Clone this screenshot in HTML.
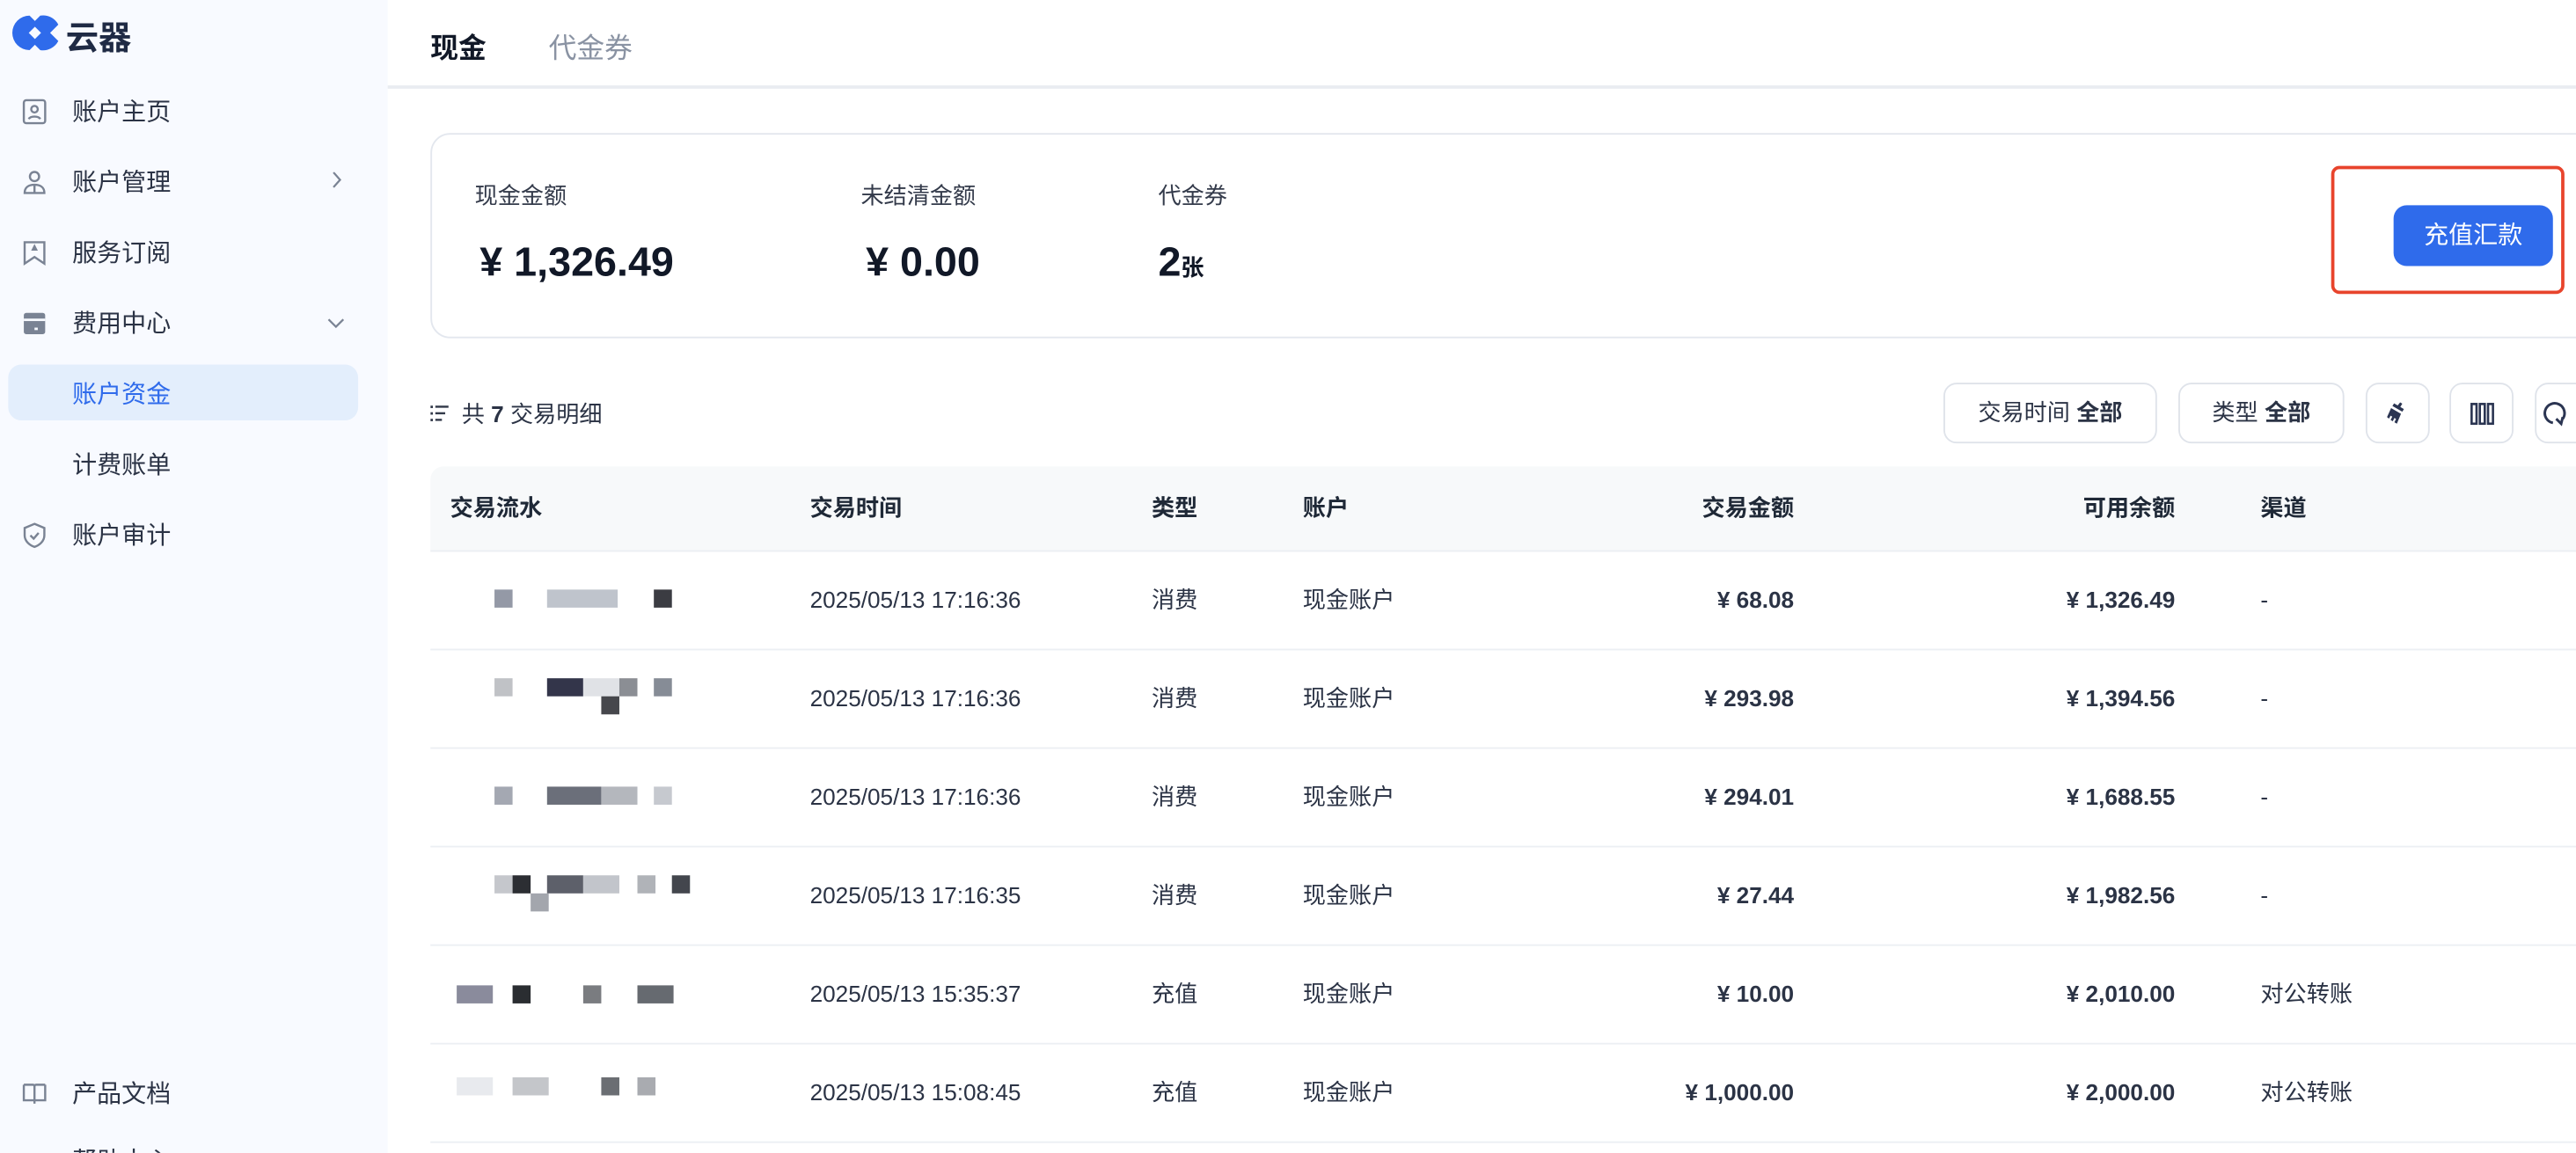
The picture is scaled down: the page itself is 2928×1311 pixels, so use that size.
<!DOCTYPE html>
<html><head><meta charset="utf-8"><style>
html,body{margin:0;padding:0;width:2928px;height:1310px;overflow:hidden;background:#fff}
#w{position:absolute;left:0;top:0;width:1568px;height:702px;transform:scale(1.8673);transform-origin:0 0;font-family:"Liberation Sans","Noto Sans CJK SC",sans-serif;color:#1f2937}
.a{position:absolute;white-space:nowrap}
#sb{position:absolute;left:0;top:0;width:236px;height:702px;background:#f8faff;overflow:hidden}
.ni{position:absolute;left:44px;font-size:15px;color:#2b3345;line-height:20px}
.ic{position:absolute;left:13px;width:16px;height:16px}
.th{position:absolute;top:299px;font-size:14px;font-weight:bold;color:#1f2937;line-height:20px}
.td{position:absolute;font-size:14px;color:#2b3345;line-height:20px}
.r{text-align:right}
.b{font-weight:bold}
.btn{position:absolute;top:233px;height:37px;border:1px solid #dfe3ea;border-radius:8px;box-sizing:border-box;background:#fff;font-size:14px;color:#2b3345;line-height:35px;text-align:center}
.px{position:absolute;width:11px;height:11px}
</style></head><body><div id="w">
<div id="sb">
<svg class="a" style="left:6px;top:9px" width="32" height="22" viewBox="0 0 32 22"><path d="M12 0.5 A10.5 10.5 0 1 0 12 21.5 L17 16.5 L11.5 11 L17 5.5 Z" fill="#2f6beb"/><path d="M18.5 0.5 A10.5 10.5 0 0 1 29.5 6 L24.5 11 L29.5 16 A10.5 10.5 0 0 1 18.5 21.5 L13.5 16.5 L19 11 L13.5 5.5 Z" fill="#2f6beb"/></svg>
<div class="a" style="left:40px;top:7px;font-size:20px;font-weight:bold;color:#1f2a44">云器</div>
<svg class="ic" style="top:60px" viewBox="0 0 16 16" fill="none" stroke="#7a8394" stroke-width="1.3"><rect x="1.5" y="1" width="13" height="14" rx="1.5"/><circle cx="8" cy="6.5" r="2"/><path d="M4.5 12.5c1-2 6-2 7 0"/></svg>
<div class="ni" style="top:59px">账户主页</div>
<svg class="ic" style="top:103px" viewBox="0 0 16 16" fill="none" stroke="#7a8394" stroke-width="1.3"><circle cx="8" cy="4.5" r="2.8"/><path d="M2 14.5c0-3.5 2.5-5 6-5s6 1.5 6 5Z M8 10v4.5"/></svg>
<div class="ni" style="top:102px">账户管理</div>
<svg class="a" style="left:201px;top:104px" width="8" height="11" viewBox="0 0 8 11" fill="none" stroke="#7a8394" stroke-width="1.2"><path d="M2 1l4 4.5-4 4.5"/></svg>
<svg class="ic" style="top:146px" viewBox="0 0 16 16" fill="none" stroke="#7a8394" stroke-width="1.3"><path d="M2 1.5h12v13l-6-4-6 4Z"/><path d="M8 4l1 2h-2Z" fill="#7a8394"/></svg>
<div class="ni" style="top:145px">服务订阅</div>
<svg class="ic" style="top:189px" viewBox="0 0 16 16"><rect x="1.5" y="1.5" width="13" height="13" rx="1.5" fill="#7a8394"/><rect x="1.5" y="5" width="13" height="1.5" fill="#f8faff"/><rect x="8" y="10.5" width="2" height="1.5" fill="#f8faff"/></svg>
<div class="ni" style="top:188px">费用中心</div>
<svg class="a" style="left:199px;top:193px" width="11" height="8" viewBox="0 0 11 8" fill="none" stroke="#7a8394" stroke-width="1.2"><path d="M1 1.5l4.5 4.5 4.5-4.5"/></svg>
<div class="a" style="left:5px;top:222px;width:213px;height:34px;border-radius:8px;background:#e3eefc"></div>
<div class="ni" style="top:231px;color:#2f6beb">账户资金</div>
<div class="ni" style="top:274px">计费账单</div>
<svg class="ic" style="top:318px" viewBox="0 0 16 16" fill="none" stroke="#7a8394" stroke-width="1.3"><path d="M8 1l6 2.5v4.5c0 3.5-3 6-6 7-3-1-6-3.5-6-7V3.5Z"/><path d="M5.5 8l2 2 3-3.5"/></svg>
<div class="ni" style="top:317px">账户审计</div>
<svg class="ic" style="top:658px" viewBox="0 0 16 16" fill="none" stroke="#7a8394" stroke-width="1.3"><path d="M1.5 2.5h5.5c.6 0 1 .4 1 1v10.5M14.5 2.5H9c-.6 0-1 .4-1 1M1.5 2.5v9.5h13V2.5"/></svg>
<div class="ni" style="top:657px">产品文档</div>
<div class="ni" style="top:698px">帮助中心</div>
</div>
<div class="a" style="left:262px;top:15px;font-size:17px;font-weight:bold;color:#111827">现金</div>
<div class="a" style="left:334px;top:15px;font-size:17px;color:#8a93a3">代金券</div>
<div class="a" style="left:236px;top:52px;width:1332px;height:2px;background:#e9ecf1"></div>
<div class="a" style="left:262px;top:81px;width:1320px;height:125px;border:1px solid #e3e7ee;border-radius:12px;box-sizing:border-box"></div>
<div class="a" style="left:289px;top:109px;font-size:14px;color:#333a4a">现金金额</div>
<div class="a" style="left:524px;top:109px;font-size:14px;color:#333a4a">未结清金额</div>
<div class="a" style="left:705px;top:109px;font-size:14px;color:#333a4a">代金券</div>
<div class="a b" style="left:292px;top:146px;font-size:25px;color:#111827">¥ 1,326.49</div>
<div class="a b" style="left:527px;top:146px;font-size:25px;color:#111827">¥ 0.00</div>
<div class="a b" style="left:705px;top:146px;font-size:25px;color:#111827">2<span style="font-size:14px">张</span></div>
<div class="a" style="left:1419px;top:101px;width:142px;height:78px;border:2.5px solid #e8442c;border-radius:5px;box-sizing:border-box"></div>
<div class="a" style="left:1457px;top:125px;width:97px;height:37px;border-radius:8px;background:#2f6beb;color:#fff;font-size:15px;line-height:38px;text-align:center">充值汇款</div>
<svg class="a" style="left:262px;top:246px" width="12" height="12" viewBox="0 0 12 12" fill="#333a4a"><rect x="0" y="1" width="1.5" height="1.5"/><rect x="3" y="1" width="8" height="1.3"/><rect x="0" y="5" width="1.5" height="1.5"/><rect x="3" y="5" width="6" height="1.3"/><rect x="0" y="9" width="1.5" height="1.5"/><rect x="3" y="9" width="4" height="1.3"/></svg>
<div class="a" style="left:281px;top:242px;font-size:14px;color:#2b3345">共 <b>7</b> 交易明细</div>
<div class="btn" style="left:1183px;width:130px">交易时间 <b>全部</b></div>
<div class="btn" style="left:1326px;width:101px">类型 <b>全部</b></div>
<div class="btn" style="left:1440px;width:39px"><svg width="16" height="16" viewBox="0 0 16 16" style="margin-top:10px"><path d="M9 1l1.3.8-1.2 2 2.2 1.3-1 1.6-6-3.5 1-1.6 2.2 1.3Z M3.5 4.5l6 3.5-2.5 6-1.5-.9 1-2-1 -.6-1 2-1.3-.8 1-2-1-.6-1 1.8L1 10Z" fill="#2b3552"/></svg></div>
<div class="btn" style="left:1491px;width:39px"><svg width="16" height="16" viewBox="0 0 16 16" fill="none" stroke="#2b3552" stroke-width="1.4" style="margin-top:10px"><rect x="1.5" y="2" width="3" height="12"/><rect x="6.5" y="2" width="3" height="12"/><rect x="11.5" y="2" width="3" height="12"/></svg></div>
<div class="btn" style="left:1543px;width:39px"><svg width="16" height="16" viewBox="0 0 16 16" fill="none" stroke="#2b3552" stroke-width="1.6" style="margin-top:10px;margin-left:-14px"><path d="M6 13.5A6 6 0 1 1 12 11"/><path d="M8 11l3 3 1-4"/></svg></div>
<div class="a" style="left:262px;top:284px;width:1320px;height:52px;background:#f7f9fa;border-radius:8px 8px 0 0"></div>
<div class="th" style="left:274px">交易流水</div>
<div class="th" style="left:493px">交易时间</div>
<div class="th" style="left:701px">类型</div>
<div class="th" style="left:793px">账户</div>
<div class="th r" style="left:992px;width:100px">交易金额</div>
<div class="th r" style="left:1224px;width:100px">可用余额</div>
<div class="th" style="left:1376px">渠道</div>
<div class="a" style="left:262px;top:335px;width:1320px;height:1px;background:#eceff3"></div>

<div class="td" style="left:493px;top:355px">2025/05/13 17:16:36</div><div class="td" style="left:701px;top:355px">消费</div><div class="td" style="left:793px;top:355px">现金账户</div><div class="td b r" style="left:952px;width:140px;top:355px">¥ 68.08</div><div class="td b r" style="left:1184px;width:140px;top:355px">¥ 1,326.49</div><div class="td" style="left:1376px;top:355px">-</div>
<div class="a" style="left:262px;top:395px;width:1320px;height:1px;background:#eceff3"></div>
<div class="td" style="left:493px;top:415px">2025/05/13 17:16:36</div><div class="td" style="left:701px;top:415px">消费</div><div class="td" style="left:793px;top:415px">现金账户</div><div class="td b r" style="left:952px;width:140px;top:415px">¥ 293.98</div><div class="td b r" style="left:1184px;width:140px;top:415px">¥ 1,394.56</div><div class="td" style="left:1376px;top:415px">-</div>
<div class="a" style="left:262px;top:455px;width:1320px;height:1px;background:#eceff3"></div>
<div class="td" style="left:493px;top:475px">2025/05/13 17:16:36</div><div class="td" style="left:701px;top:475px">消费</div><div class="td" style="left:793px;top:475px">现金账户</div><div class="td b r" style="left:952px;width:140px;top:475px">¥ 294.01</div><div class="td b r" style="left:1184px;width:140px;top:475px">¥ 1,688.55</div><div class="td" style="left:1376px;top:475px">-</div>
<div class="a" style="left:262px;top:515px;width:1320px;height:1px;background:#eceff3"></div>
<div class="td" style="left:493px;top:535px">2025/05/13 17:16:35</div><div class="td" style="left:701px;top:535px">消费</div><div class="td" style="left:793px;top:535px">现金账户</div><div class="td b r" style="left:952px;width:140px;top:535px">¥ 27.44</div><div class="td b r" style="left:1184px;width:140px;top:535px">¥ 1,982.56</div><div class="td" style="left:1376px;top:535px">-</div>
<div class="a" style="left:262px;top:575px;width:1320px;height:1px;background:#eceff3"></div>
<div class="td" style="left:493px;top:595px">2025/05/13 15:35:37</div><div class="td" style="left:701px;top:595px">充值</div><div class="td" style="left:793px;top:595px">现金账户</div><div class="td b r" style="left:952px;width:140px;top:595px">¥ 10.00</div><div class="td b r" style="left:1184px;width:140px;top:595px">¥ 2,010.00</div><div class="td" style="left:1376px;top:595px">对公转账</div>
<div class="a" style="left:262px;top:635px;width:1320px;height:1px;background:#eceff3"></div>
<div class="td" style="left:493px;top:655px">2025/05/13 15:08:45</div><div class="td" style="left:701px;top:655px">充值</div><div class="td" style="left:793px;top:655px">现金账户</div><div class="td b r" style="left:952px;width:140px;top:655px">¥ 1,000.00</div><div class="td b r" style="left:1184px;width:140px;top:655px">¥ 2,000.00</div><div class="td" style="left:1376px;top:655px">对公转账</div>
<div class="a" style="left:262px;top:695px;width:1320px;height:1px;background:#eceff3"></div>

<div class="px" style="left:301px;top:359px;background:#9499a6"></div><div class="px" style="left:333px;top:359px;width:43px;background:#bfc4cc"></div><div class="px" style="left:398px;top:359px;background:#3b3c42"></div>
<div class="px" style="left:301px;top:413px;background:#c0c2c6"></div><div class="px" style="left:333px;top:413px;width:22px;background:#33354a"></div><div class="px" style="left:355px;top:413px;width:22px;background:#e0e2e6"></div><div class="px" style="left:377px;top:413px;background:#8b8e94"></div><div class="px" style="left:398px;top:413px;background:#868c96"></div><div class="px" style="left:366px;top:424px;background:#46474c"></div>
<div class="px" style="left:301px;top:479px;background:#a4a8b2"></div><div class="px" style="left:333px;top:479px;width:33px;background:#6b6f7a"></div><div class="px" style="left:366px;top:479px;width:22px;background:#b4b7bd"></div><div class="px" style="left:398px;top:479px;background:#c6c9cf"></div>
<div class="px" style="left:301px;top:533px;background:#c5c7cc"></div><div class="px" style="left:312px;top:533px;background:#2c2e33"></div><div class="px" style="left:333px;top:533px;width:22px;background:#5d606a"></div><div class="px" style="left:355px;top:533px;width:22px;background:#c2c5cb"></div><div class="px" style="left:388px;top:533px;background:#b0b3b8"></div><div class="px" style="left:409px;top:533px;background:#43464d"></div><div class="px" style="left:323px;top:544px;background:#a3a6ad"></div>
<div class="px" style="left:278px;top:600px;width:22px;background:#8a8b9c"></div><div class="px" style="left:312px;top:600px;background:#2a2d31"></div><div class="px" style="left:355px;top:600px;background:#7a7c80"></div><div class="px" style="left:388px;top:600px;width:22px;background:#666a70"></div>
<div class="px" style="left:278px;top:656px;width:22px;background:#e8eaee"></div><div class="px" style="left:312px;top:656px;width:22px;background:#c4c6ca"></div><div class="px" style="left:366px;top:656px;background:#6b6e73"></div><div class="px" style="left:388px;top:656px;background:#a9abb0"></div>
</div></body></html>
